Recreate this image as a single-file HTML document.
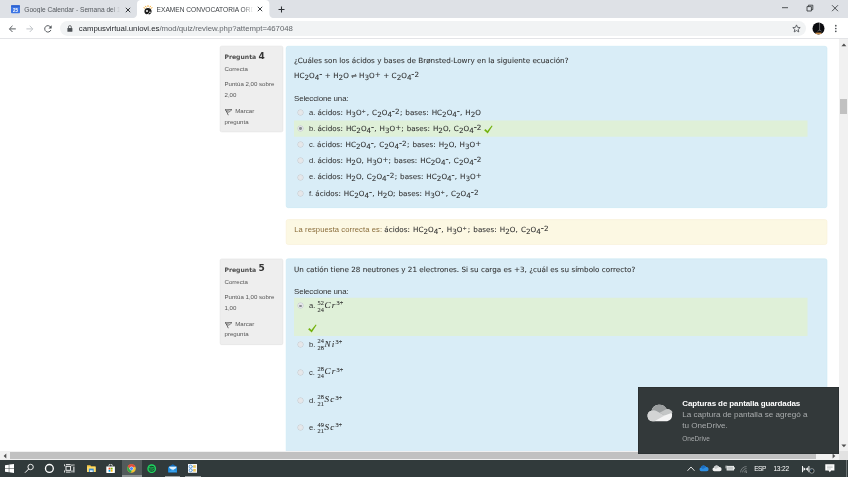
<!DOCTYPE html>
<html lang="es">
<head>
<meta charset="utf-8">
<title>EXAMEN CONVOCATORIA ORDINARIA</title>
<style>
*{box-sizing:border-box;margin:0;padding:0}
html,body{width:848px;height:477px;overflow:hidden;background:#fff}
body{position:relative;font-family:"Liberation Sans",sans-serif;color:#333;font-size:7.7px;line-height:1}
#root{position:absolute;left:0;top:0;width:848px;height:477px;overflow:hidden;filter:blur(0.45px);will-change:transform}
.abs{position:absolute}
.t{position:absolute;white-space:nowrap;line-height:1}
.v{font-family:"DejaVu Sans","Liberation Sans",sans-serif}
/* chrome */
#tabbar{left:0;top:0;width:848px;height:18.4px;background:#dee1e6}
#toolbar{left:0;top:18.2px;width:848px;height:20.8px;background:#fff;box-shadow:inset 0 -0.7px 0 #dadce0}
#pill{left:60.2px;top:21px;width:746.2px;height:14.8px;border-radius:7.4px;background:#f1f3f4}
.tabtxt{font-size:6.6px;color:#45494d;top:6.8px;overflow:hidden}
/* page */
.info{background:#eeeeee;box-shadow:inset 0 0 0 0.5px #dedede;border-radius:1.5px}
.form{background:#d9edf7;border-radius:2px}
.fb{background:#fcf8e3;border-radius:2px}
.ok{background:#dff0d8}
.radio{position:absolute;width:7px;height:7px;margin:-0.4px;background:radial-gradient(circle at 50% 50%,#e7e8ea 0,#e3e5e8 2.1px,#cdd2d7 2.8px,rgba(205,210,215,0) 3.4px)}
.radio.on:after{content:"";position:absolute;left:2.35px;top:2.35px;width:2.3px;height:2.3px;border-radius:50%;background:#8b8f93}
.q{font-size:7.6px;color:#303030}
.q.sel{font-size:7.9px !important;letter-spacing:-0.11px}
.q.v,.q .v{-webkit-text-stroke:0.07px}
.q.v,.q .v{font-size:7.2px}
.q sub,.q sup{font-size:7.2px;line-height:0}
.q sub{vertical-align:-1.5px}
.q sup{vertical-align:0.8px;letter-spacing:0.3px}
.q .v{word-spacing:0.7px}
.q.v{word-spacing:0.05px}
.q sup.pl{letter-spacing:0}
.q sup.m{font-size:8.6px;vertical-align:1px;letter-spacing:0.1px;margin-left:-0.1px}
.q sup.p{letter-spacing:0;margin-right:0.9px;font-size:5.2px;vertical-align:1.8px}
.s{font-size:6.1px;color:#555}
.mx{font-family:"Liberation Serif",serif;color:#2a2a2a;-webkit-text-stroke:0.06px}
.ms{font-size:6.3px;-webkit-text-stroke:0.08px}
.mi{font-size:9.2px;font-style:italic;letter-spacing:0.95px}
/* taskbar */
#taskbar{left:0;top:460.4px;width:848px;height:16.6px;background:#313a3b}
#toast{left:637.7px;top:386.5px;width:201px;height:67px;background:#33393a;box-shadow:inset 0 0 0 0.6px #262c2d}
</style>
</head>
<body>
<div id="root">
<!-- ===== browser chrome ===== -->
<div id="tabbar" class="abs"></div>
<div id="toolbar" class="abs"></div>
<svg class="abs" style="left:131px;top:0" width="146" height="19" viewBox="0 0 146 19"><path d="M0 18.3 C3.6 18.3 6 17.2 6 13.6 V4.2 C6 1.4 7.4 0 10.2 0 H134.2 C137 0 138.4 1.4 138.4 4.2 V13.6 C138.4 17.2 140.8 18.3 144.4 18.3 V19 H0 Z" fill="#fff"/></svg>
<div id="pill" class="abs"></div>
<!-- tab 1 -->
<svg class="abs" style="left:11px;top:5.2px" width="9" height="8.4" viewBox="0 0 9 8.4"><rect x="0" y="0.3" width="9" height="7.9" rx="0.9" fill="#3b74e4"/><rect x="0" y="0.3" width="9" height="1.8" rx="0.8" fill="#2f63cf"/><text x="4.5" y="6.7" font-family="Liberation Sans, sans-serif" font-size="4.6" font-weight="bold" fill="#fff" text-anchor="middle">25</text></svg>
<div class="t tabtxt" style="left:24.3px;width:96px;color:#54585d">Google Calendar - Semana del 18</div>
<div class="abs" style="left:111px;top:3px;width:10px;height:12px;background:linear-gradient(90deg,rgba(222,225,230,0),#dee1e6 92%)"></div>
<svg class="abs" style="left:125.4px;top:6.8px" width="6" height="6" viewBox="0 0 6 6"><path d="M0.8 0.8 L5.2 5.2 M5.2 0.8 L0.8 5.2" stroke="#2b2e32" stroke-width="0.95" fill="none"/></svg>
<!-- tab 2 -->
<svg class="abs" style="left:142.8px;top:4.6px" width="10" height="10" viewBox="0 0 10 10"><g stroke="#f2a21b" stroke-width="0.9" fill="none"><path d="M5 0.2 V2 M2.3 0.9 L3.3 2.4 M7.7 0.9 L6.7 2.4 M0.6 2.6 L2.2 3.4 M9.4 2.6 L7.8 3.4"/></g><path d="M1.4 6.3 C1.4 4 3 2.9 5 2.9 C7 2.9 8.6 4 8.6 6.3 C8.6 8.3 7.4 9.5 5.6 9.5 L5.8 8 L4.6 8.9 L3.2 9.2 C2 8.7 1.4 7.6 1.4 6.3 Z" fill="#1b1b1b"/><circle cx="4" cy="6" r="1" fill="#fff"/><circle cx="6.9" cy="7.3" r="0.8" fill="#fff"/></svg>
<div class="t tabtxt" style="left:156.6px;width:96px;color:#3d4145">EXAMEN CONVOCATORIA ORDINARIA</div>
<div class="abs" style="left:242.5px;top:3px;width:11px;height:12px;background:linear-gradient(90deg,rgba(255,255,255,0),#fff 92%)"></div>
<svg class="abs" style="left:257.3px;top:6.4px" width="6" height="6" viewBox="0 0 6 6"><path d="M0.8 0.8 L5.2 5.2 M5.2 0.8 L0.8 5.2" stroke="#33363a" stroke-width="0.95" fill="none"/></svg>
<svg class="abs" style="left:277.5px;top:5.5px" width="7" height="7" viewBox="0 0 7 7"><path d="M3.5 0.5 V6.5 M0.5 3.5 H6.5" stroke="#2d3034" stroke-width="1.05" fill="none"/></svg>
<!-- window controls -->
<svg class="abs" style="left:780px;top:3px" width="62" height="11" viewBox="0 0 62 11"><g stroke="#2b2e31" stroke-width="0.8" fill="none"><path d="M2 4.7 H8"/><path d="M27 3.6 H31.4 V8 H27 Z"/><path d="M28.4 3.6 V2.2 H32.8 V6.6 H31.4"/><path d="M52 2.2 L58 8.2 M58 2.2 L52 8.2"/></g></svg>
<!-- toolbar icons -->
<svg class="abs" style="left:8px;top:23.5px" width="48" height="10" viewBox="0 0 48 10"><g fill="none" stroke-width="0.95"><path d="M7.8 4.9 H1.6 M4.5 1.8 L1.4 4.9 L4.5 8" stroke="#4f5357"/><path d="M18.4 4.9 H24.6 M21.7 1.8 L24.8 4.9 L21.7 8" stroke="#bcc0c4"/><path d="M42.6 3.1 A3.2 3.2 0 1 0 42.9 6" stroke="#4f5357"/></g><path d="M43.6 1.3 V4.4 H40.5 Z" fill="#4f5357"/></svg>
<svg class="abs" style="left:67px;top:24.6px" width="6" height="7" viewBox="0 0 6 7"><rect x="0.4" y="2.9" width="5" height="3.9" rx="0.5" fill="#4e5256"/><path d="M1.5 3 V2 A1.4 1.4 0 0 1 4.3 2 V3" fill="none" stroke="#4e5256" stroke-width="0.8"/></svg>
<div class="t" id="url" style="left:78.8px;top:24.8px;font-size:7.8px;color:#25282c;letter-spacing:-0.02px">campusvirtual.uniovi.es<span style="color:#63676b">/mod/quiz/review.php?attempt=467048</span></div>
<svg class="abs" style="left:791.5px;top:24.2px" width="9" height="9" viewBox="0 0 9 9"><path d="M4.5 0.9 L5.55 3.35 L8.2 3.6 L6.2 5.35 L6.8 7.95 L4.5 6.55 L2.2 7.95 L2.8 5.35 L0.8 3.6 L3.45 3.35 Z" fill="none" stroke="#4f5357" stroke-width="0.85" stroke-linejoin="round"/></svg>
<svg class="abs" style="left:812px;top:22px" width="13" height="13" viewBox="0 0 13 13"><defs><clipPath id="av"><circle cx="6.5" cy="6.5" r="6"/></clipPath></defs><circle cx="6.5" cy="6.5" r="6" fill="#0b0c10"/><g clip-path="url(#av)"><path d="M7.6 1 V8.5" stroke="#c9c9c9" stroke-width="0.5"/><path d="M5.5 9.3 L7.6 8 L9.6 9.3" stroke="#8a8a8a" stroke-width="0.6" fill="none"/><rect x="3.5" y="10.6" width="6" height="2" fill="#c98d4a"/></g></svg>
<svg class="abs" style="left:834px;top:24px" width="4" height="9" viewBox="0 0 4 9"><g fill="#4f5357"><circle cx="1.8" cy="1.7" r="0.85"/><circle cx="1.8" cy="4.5" r="0.85"/><circle cx="1.8" cy="7.3" r="0.85"/></g></svg>

<!-- ===== page ===== -->
<svg class="abs" style="left:0;top:0" width="848" height="477" viewBox="0 0 848 477">
<rect x="220.17" y="46.17" width="62.66" height="85.66" rx="1.5" fill="#eeeeee" stroke="#dfdfdf" stroke-width="0.55"/>
<rect x="286.17" y="46.27" width="540.76" height="161.36" rx="2" fill="#d9edf7" stroke="#c7e7f3" stroke-width="0.55"/>
<rect x="294.00" y="120.50" width="513.50" height="16.20" rx="0" fill="#dff0d8"/>
<rect x="286.17" y="219.57" width="540.76" height="24.96" rx="2" fill="#fcf8e3" stroke="#f8eed3" stroke-width="0.55"/>
<rect x="220.17" y="258.97" width="62.66" height="85.66" rx="1.5" fill="#eeeeee" stroke="#dfdfdf" stroke-width="0.55"/>
<rect x="286.17" y="258.77" width="540.76" height="210.96" rx="2" fill="#d9edf7" stroke="#c7e7f3" stroke-width="0.55"/>
<rect x="294.00" y="297.80" width="513.50" height="38.20" rx="0" fill="#dff0d8"/>
</svg>
<div class="t v" style="left:224.5px;top:53.94px;font-size:6.1px;font-weight:bold;color:#4a4a4a">Pregunta</div>
<div class="t v" style="left:258.4px;top:51.69px;font-size:9.0px;font-weight:bold;color:#333">4</div>
<div class="t s" style="left:224.5px;top:66.24px;font-size:6.1px;">Correcta</div>
<div class="t s" style="left:224.5px;top:81.34px;font-size:6.1px;">Puntúa 2,00 sobre</div>
<div class="t s" style="left:224.5px;top:92.44px;font-size:6.1px;">2,00</div>
<svg class="abs" style="left:224.8px;top:109.30px" width="8" height="7" viewBox="0 0 8 7"><path d="M0.1 0.2 L7 0.6 L3.9 3.2 L1.6 2.7 Z" fill="none" stroke="#555" stroke-width="0.75" stroke-linejoin="round"/><path d="M0.6 0.5 L3.3 6.2" fill="none" stroke="#555" stroke-width="0.85"/><path d="M1.2 1 L5 1.2 L3.6 2.4 L1.9 2.1Z" fill="#999"/></svg>
<div class="t s" style="left:235.3px;top:108.34px;font-size:6.1px;">Marcar</div>
<div class="t s" style="left:224.5px;top:118.84px;font-size:6.1px;">pregunta</div>
<div class="t v" style="left:224.5px;top:266.54px;font-size:6.1px;font-weight:bold;color:#4a4a4a">Pregunta</div>
<div class="t v" style="left:258.4px;top:264.29px;font-size:9.0px;font-weight:bold;color:#333">5</div>
<div class="t s" style="left:224.5px;top:278.84px;font-size:6.1px;">Correcta</div>
<div class="t s" style="left:224.5px;top:293.94px;font-size:6.1px;">Puntúa 1,00 sobre</div>
<div class="t s" style="left:224.5px;top:305.04px;font-size:6.1px;">1,00</div>
<svg class="abs" style="left:224.8px;top:321.90px" width="8" height="7" viewBox="0 0 8 7"><path d="M0.1 0.2 L7 0.6 L3.9 3.2 L1.6 2.7 Z" fill="none" stroke="#555" stroke-width="0.75" stroke-linejoin="round"/><path d="M0.6 0.5 L3.3 6.2" fill="none" stroke="#555" stroke-width="0.85"/><path d="M1.2 1 L5 1.2 L3.6 2.4 L1.9 2.1Z" fill="#999"/></svg>
<div class="t s" style="left:235.3px;top:320.94px;font-size:6.1px;">Marcar</div>
<div class="t s" style="left:224.5px;top:331.44px;font-size:6.1px;">pregunta</div>
<div class="t v q" style="left:294px;top:56.81px;font-size:7.2px;">¿Cuáles son los ácidos y bases de Brønsted-Lowry en la siguiente ecuación?</div>
<div class="t v q" style="left:294px;top:71.91px;font-size:7.2px;word-spacing:0.1px">HC<sub>2</sub>O<sub>4</sub><sup class="m">-</sup> + H<sub>2</sub>O <span style="font-size:6.6px;position:relative;top:-0.2px">⇌</span> H<sub>3</sub>O<sup class="pl">+</sup> + C<sub>2</sub>O<sub>4</sub><sup class="m">-</sup><sup>2</sup></div>
<div class="t q sel" style="left:294px;top:94.51px;font-size:7.9px;">Seleccione una:</div>
<div class="radio" style="left:297.4px;top:109.4px"></div>
<div class="t q" style="left:309px;top:108.57px;font-size:7.6px;">a. <span class="v">ácidos: H<sub>3</sub>O<sup class="p">+</sup>, C<sub>2</sub>O<sub>4</sub><sup class="m">-</sup><sup>2</sup>; bases: HC<sub>2</sub>O<sub>4</sub><sup class="m">-</sup>, H<sub>2</sub>O</span></div>
<div class="radio on" style="left:297.4px;top:125.4px"></div>
<div class="t q" style="left:309px;top:124.57px;font-size:7.6px;">b. <span class="v">ácidos: HC<sub>2</sub>O<sub>4</sub><sup class="m">-</sup>, H<sub>3</sub>O<sup class="pl">+</sup>; bases: H<sub>2</sub>O, C<sub>2</sub>O<sub>4</sub><sup class="m">-</sup><sup>2</sup></span></div>
<div class="radio" style="left:297.4px;top:141.4px"></div>
<div class="t q" style="left:309px;top:140.57px;font-size:7.6px;">c. <span class="v">ácidos: HC<sub>2</sub>O<sub>4</sub><sup class="m">-</sup>, C<sub>2</sub>O<sub>4</sub><sup class="m">-</sup><sup>2</sup>; bases: H<sub>2</sub>O, H<sub>3</sub>O<sup class="pl">+</sup></span></div>
<div class="radio" style="left:297.4px;top:157.4px"></div>
<div class="t q" style="left:309px;top:156.57px;font-size:7.6px;">d. <span class="v">ácidos: H<sub>2</sub>O, H<sub>3</sub>O<sup class="pl">+</sup>; bases: HC<sub>2</sub>O<sub>4</sub><sup class="m">-</sup>, C<sub>2</sub>O<sub>4</sub><sup class="m">-</sup><sup>2</sup></span></div>
<div class="radio" style="left:297.4px;top:173.9px"></div>
<div class="t q" style="left:309px;top:173.07px;font-size:7.6px;">e. <span class="v">ácidos: H<sub>2</sub>O, C<sub>2</sub>O<sub>4</sub><sup class="m">-</sup><sup>2</sup>; bases: HC<sub>2</sub>O<sub>4</sub><sup class="m">-</sup>, H<sub>3</sub>O<sup class="pl">+</sup></span></div>
<div class="radio" style="left:297.4px;top:190.4px"></div>
<div class="t q" style="left:309px;top:189.57px;font-size:7.6px;">f. <span class="v">ácidos: HC<sub>2</sub>O<sub>4</sub><sup class="m">-</sup>, H<sub>2</sub>O; bases: H<sub>3</sub>O<sup class="p">+</sup>, C<sub>2</sub>O<sub>4</sub><sup class="m">-</sup><sup>2</sup></span></div>
<div class="t q" style="left:294.2px;top:226.07px;font-size:7.6px;color:#8a6d3b;letter-spacing:0.09px">La respuesta correcta es: <span class="v" style="color:#303030;word-spacing:0.9px;letter-spacing:0">ácidos: HC<sub>2</sub>O<sub>4</sub><sup class="m">-</sup>, H<sub>3</sub>O<sup class="p">+</sup>; bases: H<sub>2</sub>O, C<sub>2</sub>O<sub>4</sub><sup class="m">-</sup><sup>2</sup></span></div>
<div class="t v q" style="left:294px;top:265.61px;font-size:7.2px;">Un catión tiene 28 neutrones y 21 electrones. Si su carga es +3, ¿cuál es su símbolo correcto?</div>
<div class="t q sel" style="left:294px;top:287.71px;font-size:7.9px;">Seleccione una:</div>
<div class="radio on" style="left:297.4px;top:302.8px"></div>
<div class="t q" style="left:309px;top:301.97px;font-size:7.6px;">a.</div>
<div class="t mx ms" style="left:317.6px;top:299.62px;font-size:6.3px;">52</div>
<div class="t mx ms" style="left:317.6px;top:306.52px;font-size:6.3px;">24</div>
<div class="t mx mi" style="left:324.6px;top:300.69px;font-size:9.2px;">Cr<span class="ms" style="font-style:normal;letter-spacing:0;position:relative;top:-2.8px;left:0.3px">3+</span></div>
<div class="radio" style="left:297.4px;top:341.6px"></div>
<div class="t q" style="left:309px;top:340.77px;font-size:7.6px;">b.</div>
<div class="t mx ms" style="left:317.6px;top:338.42px;font-size:6.3px;">24</div>
<div class="t mx ms" style="left:317.6px;top:345.32px;font-size:6.3px;">28</div>
<div class="t mx mi" style="left:324.6px;top:339.50px;font-size:9.2px;">Ni<span class="ms" style="font-style:normal;letter-spacing:0;position:relative;top:-2.8px;left:0.3px">3+</span></div>
<div class="radio" style="left:297.4px;top:369.5px"></div>
<div class="t q" style="left:309px;top:368.67px;font-size:7.6px;">c.</div>
<div class="t mx ms" style="left:317.6px;top:366.32px;font-size:6.3px;">28</div>
<div class="t mx ms" style="left:317.6px;top:373.22px;font-size:6.3px;">24</div>
<div class="t mx mi" style="left:324.6px;top:367.40px;font-size:9.2px;">Cr<span class="ms" style="font-style:normal;letter-spacing:0;position:relative;top:-2.8px;left:0.3px">3+</span></div>
<div class="radio" style="left:297.4px;top:397.5px"></div>
<div class="t q" style="left:309px;top:396.67px;font-size:7.6px;">d.</div>
<div class="t mx ms" style="left:317.6px;top:394.32px;font-size:6.3px;">28</div>
<div class="t mx ms" style="left:317.6px;top:401.22px;font-size:6.3px;">21</div>
<div class="t mx mi" style="left:324.6px;top:395.40px;font-size:9.2px;">Sc<span class="ms" style="font-style:normal;letter-spacing:0;position:relative;top:-2.8px;left:0.3px">3+</span></div>
<div class="radio" style="left:297.4px;top:424.7px"></div>
<div class="t q" style="left:309px;top:423.87px;font-size:7.6px;">e.</div>
<div class="t mx ms" style="left:317.6px;top:421.52px;font-size:6.3px;">49</div>
<div class="t mx ms" style="left:317.6px;top:428.42px;font-size:6.3px;">21</div>
<div class="t mx mi" style="left:324.6px;top:422.60px;font-size:9.2px;">Sc<span class="ms" style="font-style:normal;letter-spacing:0;position:relative;top:-2.8px;left:0.3px">3+</span></div>
<svg class="abs" style="left:307.9px;top:324.2px" width="9" height="9" viewBox="0 0 9 9"><path d="M0.1 5.2 L1.5 4 L3.4 6.1 L7.7 0.4 L8.6 1 L3.7 8.5 Z" fill="#74b20e"/></svg>
<svg class="abs" style="left:484.1px;top:124.5px" width="9" height="9" viewBox="0 0 9 9"><path d="M0.1 5.2 L1.5 4 L3.4 6.1 L7.7 0.4 L8.6 1 L3.7 8.5 Z" fill="#74b20e"/></svg>
<!-- ===== scrollbars ===== -->
<div class="abs" style="left:0;top:451px;width:848px;height:9.6px;background:#f1f1f1"></div>
<div class="abs" style="left:838.7px;top:39px;width:9.3px;height:412px;background:#f1f1f1"></div>
<div class="abs" style="left:838.7px;top:451px;width:9.3px;height:9.5px;background:#e2e2e2"></div>
<div class="abs" style="left:839.7px;top:99.3px;width:7.3px;height:14.6px;background:#c1c1c1"></div>
<div class="abs" style="left:9.8px;top:452.4px;width:805.8px;height:6.7px;background:#c1c1c1"></div>
<svg class="abs" style="left:840.5px;top:42.5px" width="6" height="4" viewBox="0 0 6 4"><path d="M0.4 3.3 L2.9 0.6 L5.4 3.3 Z" fill="#505050"/></svg>
<svg class="abs" style="left:840.5px;top:444.3px" width="6" height="4" viewBox="0 0 6 4"><path d="M0.4 0.6 L2.9 3.3 L5.4 0.6 Z" fill="#505050"/></svg>
<svg class="abs" style="left:3.4px;top:453.2px" width="4" height="6" viewBox="0 0 4 6"><path d="M3.3 0.4 L0.6 2.9 L3.3 5.4 Z" fill="#505050"/></svg>
<svg class="abs" style="left:831.6px;top:453.2px" width="4" height="6" viewBox="0 0 4 6"><path d="M0.6 0.4 L3.3 2.9 L0.6 5.4 Z" fill="#505050"/></svg>
<!-- ===== taskbar ===== -->
<div id="taskbar" class="abs"></div>
<div class="abs" style="left:122.2px;top:460.4px;width:19.7px;height:16.6px;background:#525a5b"></div>
<div class="abs" style="left:122.2px;top:475px;width:19.7px;height:2px;background:#8d9394"></div>
<div class="abs" style="left:164.8px;top:475.6px;width:15.2px;height:1.4px;background:#9aa0a1"></div>
<div class="abs" style="left:185px;top:475.6px;width:15.6px;height:1.4px;background:#9aa0a1"></div>
<div class="abs" style="left:845.7px;top:460.4px;width:0.6px;height:16.6px;background:#6d7476"></div>
<!-- start -->
<svg class="abs" style="left:5px;top:464.2px" width="9" height="9" viewBox="0 0 9 9"><path d="M0 1.2 L3.8 0.65 V4.2 H0 Z M4.3 0.6 L9 0 V4.2 H4.3 Z M0 4.7 H3.8 V8.2 L0 7.7 Z M4.3 4.7 H9 V8.9 L4.3 8.3 Z" fill="#fff"/></svg>
<!-- search -->
<svg class="abs" style="left:24px;top:463px" width="11" height="11" viewBox="0 0 11 11"><circle cx="6.6" cy="4" r="2.7" fill="none" stroke="#fff" stroke-width="0.9"/><path d="M4.7 6 L1 9.7" stroke="#fff" stroke-width="1" fill="none"/></svg>
<!-- cortana -->
<svg class="abs" style="left:44px;top:463px" width="11" height="11" viewBox="0 0 11 11"><circle cx="5.4" cy="5.4" r="3.9" fill="none" stroke="#fff" stroke-width="1.35"/></svg>
<!-- task view -->
<svg class="abs" style="left:64px;top:464px" width="11" height="9" viewBox="0 0 11 9"><g fill="none" stroke="#fff" stroke-width="0.9"><rect x="2" y="2.3" width="4.6" height="4"/><path d="M0.6 0.3 V2.2 M0.6 6.4 V8.5 M8 0.3 V2.2 M8 6.4 V8.5 M2 0.6 H6.6 M2 8.1 H6.6"/><path d="M9.9 2.6 V8.5" stroke-width="1"/></g><rect x="9.4" y="0.4" width="1" height="1.2" fill="#fff"/></svg>
<!-- explorer -->
<svg class="abs" style="left:86.8px;top:465px" width="9" height="8" viewBox="0 0 9 8"><path d="M0 0.3 H3.3 L4.1 1.2 H8.6 V7 H0 Z" fill="#f7c948"/><path d="M0 2.1 H8.6 V7 H0 Z" fill="#fddc6c"/><rect x="1.9" y="3.6" width="4.8" height="3.4" fill="#3a8fd9"/><rect x="2.9" y="5.3" width="2.8" height="1.7" fill="#e9f3fb"/></svg>
<!-- store -->
<svg class="abs" style="left:106.3px;top:463.6px" width="9.4" height="9.4" viewBox="0 0 9.4 9.4"><path d="M3 2.4 V1.6 A1.6 1.6 0 0 1 6.2 1.6 V2.4" fill="none" stroke="#fff" stroke-width="0.8"/><path d="M0.3 2.4 H8.9 V8.3 A0.8 0.8 0 0 1 8.1 9.1 H1.1 A0.8 0.8 0 0 1 0.3 8.3 Z" fill="#fff"/><rect x="2.6" y="3.7" width="1.8" height="1.8" fill="#f25022"/><rect x="4.8" y="3.7" width="1.8" height="1.8" fill="#7fba00"/><rect x="2.6" y="5.9" width="1.8" height="1.8" fill="#00a4ef"/><rect x="4.8" y="5.9" width="1.8" height="1.8" fill="#ffb900"/></svg>
<!-- chrome -->
<svg class="abs" style="left:127.4px;top:464.1px" width="9" height="9" viewBox="0 0 9 9"><circle cx="4.5" cy="4.5" r="4.3" fill="#f2c230"/><path d="M4.5 4.5 L0.78 2.35 A4.3 4.3 0 0 1 8.22 2.35 Z" fill="#dd4b3e"/><path d="M0.78 2.35 A4.3 4.3 0 0 0 3.6 8.7 L5.8 4.9 L2.8 4.9 Z" fill="#2da650"/><path d="M4.5 2.6 H8.3 A4.3 4.3 0 0 0 0.9 2.2 L2.7 5 Z" fill="#dd4b3e"/><circle cx="4.5" cy="4.5" r="2" fill="#f5f5f5"/><circle cx="4.5" cy="4.5" r="1.55" fill="#4a8af4"/></svg>
<!-- spotify -->
<svg class="abs" style="left:147.3px;top:464px" width="9.4" height="9.4" viewBox="0 0 9.4 9.4"><circle cx="4.7" cy="4.7" r="4.4" fill="#1ed760"/><circle cx="4.7" cy="4.7" r="3" fill="#1a3a2a"/><path d="M2.3 3.5 C4 3 5.8 3.2 7.2 4 M2.6 4.9 C4 4.5 5.5 4.7 6.7 5.4 M2.9 6.2 C4 5.9 5.2 6 6.1 6.6" stroke="#1ed760" stroke-width="0.75" fill="none" stroke-linecap="round"/></svg>
<!-- mail -->
<svg class="abs" style="left:167.6px;top:464.2px" width="9.6" height="8.6" viewBox="0 0 9.6 8.6"><path d="M0.2 3 L4.8 0.2 L9.4 3 V8.3 H0.2 Z" fill="#0f6cbd"/><path d="M1.2 2.6 H8.4 V6 H1.2 Z" fill="#dff0fb"/><path d="M0.2 3.2 L4.8 6.2 L9.4 3.2 V8.3 H0.2 Z" fill="#1f8fe0"/><path d="M0.2 8.3 L4.8 5.6 L9.4 8.3 Z" fill="#3aa0ea"/></svg>
<!-- other app -->
<svg class="abs" style="left:188px;top:464px" width="9" height="9" viewBox="0 0 9 9"><rect x="0" y="0" width="9" height="8.8" fill="#f4f6f8"/><circle cx="2.6" cy="2.6" r="1.5" fill="none" stroke="#3d8ad6" stroke-width="0.8"/><circle cx="2.6" cy="6.3" r="1.5" fill="none" stroke="#3d8ad6" stroke-width="0.8"/><rect x="5.2" y="1.2" width="2.6" height="2.6" fill="#f1c85a"/><rect x="5.2" y="5" width="2.6" height="2.6" fill="#f1c85a"/><path d="M4.1 2.6 H5.2 M4.1 6.3 H5.2" stroke="#3d8ad6" stroke-width="0.6"/></svg>
<!-- tray -->
<svg class="abs" style="left:686.6px;top:466px" width="8" height="5.4" viewBox="0 0 8 5.4"><path d="M0.5 4.8 L4 1 L7.5 4.8" fill="none" stroke="#fff" stroke-width="0.85"/></svg>
<svg class="abs" style="left:698.6px;top:465.3px" width="10" height="6.6" viewBox="0 0 10 6.6"><path d="M2.3 6.3 A2 2 0 0 1 1.9 2.4 A2.9 2.9 0 0 1 7.2 1.9 A2.2 2.2 0 0 1 7.6 6.3 Z" fill="#2f8fe3"/><path d="M1.9 2.4 A2.9 2.9 0 0 1 7.2 1.9 L3.8 4 Z" fill="#1c6fc4"/></svg>
<svg class="abs" style="left:712.2px;top:465.3px" width="10" height="6.6" viewBox="0 0 10 6.6"><path d="M2.3 6.3 A2 2 0 0 1 1.9 2.4 A2.9 2.9 0 0 1 7.2 1.9 A2.2 2.2 0 0 1 7.6 6.3 Z" fill="#f0f0f0"/><path d="M1.9 2.4 A2.9 2.9 0 0 1 7.2 1.9 L3.8 4 Z" fill="#c9cbcc"/></svg>
<svg class="abs" style="left:725px;top:465.2px" width="10" height="6.4" viewBox="0 0 10 6.4"><rect x="1.6" y="0.9" width="7.4" height="4.6" fill="#eceeee"/><rect x="9" y="2.2" width="0.8" height="2" fill="#eceeee"/><path d="M0.2 1.2 H2.4 M0.2 2.8 H1.8" stroke="#eceeee" stroke-width="0.7"/><rect x="2.4" y="1.7" width="5.8" height="3" fill="#c3c7c8"/></svg>
<svg class="abs" style="left:740.2px;top:465.6px" width="8" height="7" viewBox="0 0 8 7"><g fill="none" stroke="#8c9293" stroke-width="0.75"><path d="M0.6 6.4 A5.8 5.8 0 0 1 6.6 0.6"/><path d="M2.6 6.4 A3.8 3.8 0 0 1 6.6 2.6"/><path d="M4.6 6.4 A1.8 1.8 0 0 1 6.6 4.6"/></g><circle cx="6.3" cy="6.1" r="0.7" fill="#b9bdbe"/></svg>
<div class="t" style="left:754.2px;top:465.8px;font-size:6.6px;color:#fff;letter-spacing:-0.55px">ESP</div>
<div class="t" style="left:773.4px;top:465.8px;font-size:6.6px;color:#fff;letter-spacing:-0.2px">13:22</div>
<svg class="abs" style="left:801px;top:465px" width="15" height="9" viewBox="0 0 15 9"><g stroke="#fff" stroke-width="0.95" fill="none"><path d="M1.5 1 V7.2 M7.9 1 V7.2"/></g><path d="M2.5 2.2 L4.7 4.1 L2.5 6 Z M6.9 2.2 L4.7 4.1 L6.9 6 Z" fill="#fff"/><circle cx="10.8" cy="5.9" r="2.3" fill="#1b2223" stroke="#e8eaea" stroke-width="0.55"/><circle cx="10.2" cy="4.9" r="0.5" fill="#3d8ad6"/></svg>
<svg class="abs" style="left:825px;top:464.3px" width="10" height="9" viewBox="0 0 10 9"><path d="M0.3 0.3 H9.4 V6.6 H6.1 L4.85 8.3 L3.6 6.6 H0.3 Z" fill="#fff"/><path d="M2 2.2 H7.7 M2 3.6 H7.7 M2 5 H5.8" stroke="#9aa0a1" stroke-width="0.5"/></svg>
<!-- ===== toast ===== -->
<div id="toast" class="abs"></div>
<svg class="abs" style="left:646.4px;top:403.4px" width="28" height="19" viewBox="0 0 28 19"><path d="M6.8 18.3 A5.4 5.4 0 0 1 5.5 7.7 A8.2 8.2 0 0 1 20.6 5.9 A6.3 6.3 0 0 1 21.2 18.3 Z" fill="#f4f4f4"/><path d="M5.5 7.7 A8.2 8.2 0 0 1 20.6 5.9 A6.3 6.3 0 0 1 26.4 9 L11 14.4 Z" fill="#9b9e9f"/><path d="M5.5 7.7 A5.4 5.4 0 0 1 10.4 8 L18.6 12.6 L8.4 18.3 H6.8 A5.4 5.4 0 0 1 5.5 7.7 Z" fill="#d3d4d4"/><path d="M20.6 5.9 A6.3 6.3 0 0 1 26.6 9.4 L18.6 12.6 L13.6 9.8 Z" fill="#c4c6c6"/></svg>
<div class="t" style="left:682.3px;top:399.5px;font-size:8px;font-weight:bold;color:#fff;letter-spacing:-0.12px">Capturas de pantalla guardadas</div>
<div class="t" style="left:682.3px;top:411px;font-size:8.1px;color:#a9acad">La captura de pantalla se agregó a</div>
<div class="t" style="left:682.3px;top:422px;font-size:8.1px;color:#a9acad">tu OneDrive.</div>
<div class="t" style="left:682.3px;top:435.6px;font-size:6.5px;color:#a9acad">OneDrive</div>

</div>
</body>
</html>
